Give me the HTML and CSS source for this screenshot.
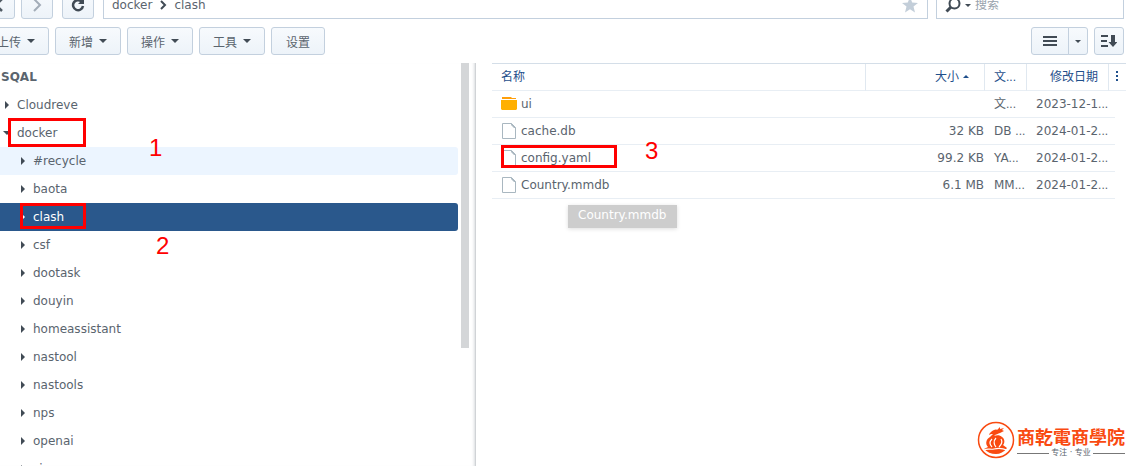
FILE: index.html
```
<!DOCTYPE html>
<html lang="zh-CN">
  <head>
    <meta charset="UTF-8" />
    <meta name="viewport" content="width=device-width, initial-scale=1.0" />
    <title>File Station</title>
    <link rel="stylesheet" href="styles.css">
  </head>
  <body>
    <div class="bar nav">
      <button class="btn icon-btn" aria-label="后退">
        <svg width="12" height="16" viewBox="0 0 12 16"><path d="M9 2L3 8l6 6" fill="none" stroke="#505a64" stroke-width="2.5" /></svg>
      </button>
      <button class="btn icon-btn" aria-label="前进">
        <svg width="12" height="16" viewBox="0 0 12 16"><path d="M3 2l6 6-6 6" fill="none" stroke="#a3adb8" stroke-width="2" /></svg>
      </button>
      <button class="btn icon-btn reload" aria-label="刷新">
        <svg width="16" height="16" viewBox="0 0 16 16"><path d="M11.500 4.500A5 5 0 1 0 13 9" fill="none" stroke="#414b55" stroke-width="2.500" /><path d="M8 7h6V1z" fill="#414b55" /></svg>
      </button>
      <div class="path">
        <a href="#">docker</a>
        <svg width="8" height="10" viewBox="0 0 8 10"><path d="M2 1l4 4-4 4" fill="none" stroke="#414b55" stroke-width="2" /></svg>
        <a href="#">clash</a>
        <svg class="star" width="16" height="16" viewBox="0 0 16 16"><path d="M8 0l2.200 5.500 5.800.4-4.500 3.700 1.500 5.900L8 12.300l-5 3.200 1.500-5.900L0 5.900l5.800-.4z" fill="#c3ced9" /></svg>
      </div>
      <div class="search">
        <svg width="16" height="16" viewBox="0 0 16 16"><circle cx="9.500" cy="6.500" r="5" fill="none" stroke="#414b55" stroke-width="2" /><path d="M6 10l-4.500 4.500" stroke="#414b55" stroke-width="3" /></svg>
        <span class="caret"></span>
        <input type="text" placeholder="搜索" aria-label="搜索" />
      </div>
    </div>

    <div class="bar tools">
      <button class="btn">上传<span class="caret"></span></button>
      <button class="btn">新增<span class="caret"></span></button>
      <button class="btn">操作<span class="caret"></span></button>
      <button class="btn">工具<span class="caret"></span></button>
      <button class="btn">设置</button>
      <div class="view-group">
        <button class="btn view" aria-label="列表视图">
          <svg width="14" height="12" viewBox="0 0 14 12"><path d="M0 2h14M0 6h14M0 10h14" stroke="#414b55" stroke-width="2" /></svg>
        </button>
        <button class="btn view-menu" aria-label="视图选项"><span class="caret"></span></button>
      </div>
      <button class="btn sort" aria-label="排序">
        <svg width="16" height="14" viewBox="0 0 16 14"><path d="M0 2h7M0 7h6M0 12h7" stroke="#414b55" stroke-width="2" /><path d="M10 1h4v7h2.500L12 13 7.500 8H10z" fill="#414b55" /></svg>
      </button>
    </div>

    <div class="main">
      <div class="sidebar">
        <ul class="tree">
          <li class="root">SQAL</li>
          <li><span class="arrow"></span>Cloudreve</li>
          <li><span class="arrow open"></span>docker</li>
          <li class="child hover"><span class="arrow"></span>#recycle</li>
          <li class="child"><span class="arrow"></span>baota</li>
          <li class="child selected"><span class="arrow"></span>clash</li>
          <li class="child"><span class="arrow"></span>csf</li>
          <li class="child"><span class="arrow"></span>dootask</li>
          <li class="child"><span class="arrow"></span>douyin</li>
          <li class="child"><span class="arrow"></span>homeassistant</li>
          <li class="child"><span class="arrow"></span>nastool</li>
          <li class="child"><span class="arrow"></span>nastools</li>
          <li class="child"><span class="arrow"></span>nps</li>
          <li class="child"><span class="arrow"></span>openai</li>
          <li class="child"><span class="arrow"></span>siyuan</li>
        </ul>
        <div class="scrollbar"></div>
      </div>

      <div class="files">
        <table>
          <colgroup>
            <col />
            <col class="col-size" />
            <col class="col-type" />
            <col class="col-date" />
            <col class="col-edge" />
            <col class="col-menu" />
          </colgroup>
          <thead>
            <tr>
              <th>名称</th>
              <th class="num">大小<span class="caret up"></span></th>
              <th>文<span class="dots">...</span></th>
              <th class="num">修改日期</th>
              <th class="more" colspan="2"><svg width="3" height="10" viewBox="0 0 3 10"><path d="M0 0h2v2H0zM0 4h2v2H0zM0 8h2v2H0z" fill="#1f4f8b" /></svg></th>
            </tr>
          </thead>
          <tbody>
            <tr>
              <td><div class="name"><svg width="16" height="16" viewBox="0 0 16 16"><path d="M1 3V1h9l1 1h4v1z" fill="#ff9f0a" /><path d="M0 4h16v9l-1 1H1l-1-1z" fill="#ffb000" /></svg>ui</div></td>
              <td class="num"></td>
              <td>文<span class="dots">...</span></td>
              <td class="date" colspan="2">2023-12-1<span class="dots">...</span></td>
            </tr>
            <tr>
              <td><div class="name"><svg class="doc" width="16" height="16" viewBox="0 0 16 16"><path d="M1.500.5h9l4 4v11h-13z" fill="#fff" stroke="#a9b7c0" /><path d="M10 0v2l3 3h2z" fill="#a9b7c0" /></svg>cache.db</div></td>
              <td class="num">32 KB</td>
              <td>DB <span class="dots">...</span></td>
              <td class="date" colspan="2">2024-01-2<span class="dots">...</span></td>
            </tr>
            <tr>
              <td><div class="name"><svg class="doc" width="16" height="16" viewBox="0 0 16 16"><path d="M1.500.5h9l4 4v11h-13z" fill="#fff" stroke="#a9b7c0" /><path d="M10 0v2l3 3h2z" fill="#a9b7c0" /></svg>config.yaml</div></td>
              <td class="num">99.2 KB</td>
              <td>YA<span class="dots">...</span></td>
              <td class="date" colspan="2">2024-01-2<span class="dots">...</span></td>
            </tr>
            <tr>
              <td><div class="name"><svg class="doc" width="16" height="16" viewBox="0 0 16 16"><path d="M1.500.5h9l4 4v11h-13z" fill="#fff" stroke="#a9b7c0" /><path d="M10 0v2l3 3h2z" fill="#a9b7c0" /></svg>Country.mmdb</div></td>
              <td class="num">6.1 MB</td>
              <td>MM<span class="dots">...</span></td>
              <td class="date" colspan="2">2024-01-2<span class="dots">...</span></td>
            </tr>
          </tbody>
        </table>
      </div>
    </div>

    <div class="tooltip">Country.mmdb</div>

    <!-- step marks -->
    <div class="mark mark-docker"></div>
    <div class="mark mark-clash"></div>
    <div class="mark mark-config"></div>
    <span class="step step-1">1</span>
    <span class="step step-2">2</span>
    <span class="step step-3">3</span>

    <div class="brand">
      <svg width="38" height="38" viewBox="0 0 38 38">
        <circle cx="19" cy="19" r="17.500" fill="none" stroke="#f94a10" stroke-width="1.500" />
        <path d="M14 11c2-2 5-3 6-2l3-3v2l4-1-2 2 2 1-4 2c-2 1-4 1-6 3 3-1 6-1 8 1 3 2 3 6 1 8l4 3c-3 4-7 6-11 6-5 0-9-2-12-5l4-2c-3-3-2-8 2-10l3-3c-2 0-3 0-4 1 0-1 1-2 2-3z" fill="#f94a10" />
        <path d="M15 18c-3 3-2 6 0 8M19 17c-3 3-2 7 0 9M24 18c2 3 0 6-2 8M7 29c4-2 6 0 10-1s8-1 13 1" fill="none" stroke="#fff" stroke-width="1.200" />
      </svg>
      <div class="brand-text">
        <div class="brand-name">商乾電商學院</div>
        <div class="brand-sub">专注 · 专业</div>
      </div>
    </div>
  </body>
</html>
```

FILE: styles.css
```
* {
  box-sizing: border-box;
}
body {
  margin: 0;
  height: 100vh;
  overflow: hidden;
  position: relative;
  display: flex;
  flex-direction: column;
  background: #fff;
  color: #5a646e;
  font-family: "DejaVu Sans", "Noto Sans CJK SC", sans-serif;
  font-size: 12px;
}
button,
input {
  font: inherit;
  color: inherit;
}
a {
  color: inherit;
  text-decoration: none;
}

.bar {
  display: flex;
  flex: none;
  height: 28px;
  margin-left: -17px;
  padding-right: 8px;
}
.nav {
  margin-top: -9px;
}
.tools {
  margin-top: 8px;
  gap: 6px;
}
.btn {
  display: flex;
  align-items: center;
  justify-content: center;
  gap: 6px;
  height: 28px;
  padding: 0 14px;
  border: 1px solid #c3d0de;
  border-radius: 3px;
  background: linear-gradient(#f7fafd, #edf3f9);
}
.icon-btn {
  width: 32px;
  padding: 0;
  margin-right: 6px;
}
.reload {
  margin-left: 3px;
  margin-right: 9px;
}
.caret {
  border: 3px solid transparent;
  border-top-color: #414b55;
  border-bottom: 0;
}
.caret.up {
  display: inline-block;
  margin-left: 4px;
  vertical-align: 3px;
  border-top: 0;
  border-bottom: 3px solid #1f4f8b;
}
.path,
.search {
  display: flex;
  align-items: center;
  border: 1px solid #c3d0de;
}
.path {
  flex: 1;
  gap: 7px;
  margin-right: 8px;
  padding: 0 9px 0 8px;
}
.star {
  margin-left: auto;
}
.search {
  width: 188px;
  padding-left: 8px;
}
.search .caret {
  margin: 0 4px;
}
.search input {
  flex: 1;
  min-width: 0;
  padding: 0;
  border: 0;
  outline: 0;
  background: none;
}
.search input::placeholder {
  color: #98a2ad;
}
.tools > .btn .caret {
  border-width: 4px 4px 0;
}
.tools > .btn {
  padding: 0 13px;
}
.tools > .btn:nth-child(5) {
  padding: 0 14px;
}
.view-group {
  display: flex;
  margin-left: auto;
}
.view {
  width: 38px;
  padding: 0;
  border-radius: 3px 0 0 3px;
}
.view-menu {
  width: 20px;
  margin-left: -1px;
  padding: 0;
  border-radius: 0 3px 3px 0;
}
.tools > .sort {
  width: 30px;
  padding: 0;
}

.main {
  display: flex;
  flex: 1;
  min-height: 0;
  margin-top: 8px;
}
.sidebar {
  display: flex;
  flex: none;
  width: 476px;
  min-height: 0;
  padding-right: 6px;
  border-right: 1px solid #d0d3d6;
  box-shadow: inset -3px 0 3px -2px #d9dcdf;
  overflow: hidden;
}
.tree {
  flex: 1;
  margin: 0 3px 0 0;
  padding: 0;
  list-style: none;
}
.tree li {
  display: flex;
  align-items: center;
  height: 28px;
  padding-left: 5px;
  border-radius: 0 3px 3px 0;
}
.tree .root {
  padding-left: 1px;
  font-weight: bold;
}
.tree .child {
  padding-left: 21px;
}
.tree .hover {
  background: #ecf5ff;
}
.tree .selected {
  background: #2a588c;
  color: #fff;
}
.arrow {
  width: 4px;
  margin-right: 8px;
  border: 4px solid transparent;
  border-left-color: #414b55;
  border-right: 0;
}
.arrow.open {
  width: 8px;
  margin: 0 6px 0 -2px;
  border: 4px solid transparent;
  border-top-color: #414b55;
  border-bottom: 0;
}
.selected .arrow {
  border-left-color: #fff;
}
.scrollbar {
  width: 8px;
  height: 285px;
  background: #d4d6d8;
}

.files {
  flex: 1;
  min-width: 0;
  padding: 0 6px 0 16px;
}
table {
  width: 100%;
  table-layout: fixed;
  border-collapse: separate;
  border-spacing: 0;
  border-top: 1px solid #d4dee8;
}
.col-size {
  width: 119px;
}
.col-type {
  width: 42px;
}
.col-date {
  width: 82px;
}
.col-edge {
  width: 6px;
}
.col-menu {
  width: 11px;
}
th,
td {
  height: 27px;
  padding: 0 0 0 9px;
  border-bottom: 1px solid #e8eef4;
  text-align: left;
  font-weight: normal;
  line-height: 16px;
  white-space: nowrap;
}
th {
  border-right: 1px solid #e0e8f0;
  color: #1f4f8b;
}
th.num {
  padding-right: 10px;
  text-align: right;
}
th.num:has(.caret) {
  padding-right: 15px;
}
th.more {
  padding-left: 7px;
  border-right: 0;
}
td.num {
  padding-right: 1px;
  text-align: right;
}
.name {
  display: flex;
  align-items: center;
  gap: 4px;
}
.dots {
  font-family: "Liberation Sans", sans-serif;
  font-size: 12px;
}

.tooltip {
  position: absolute;
  top: 205px;
  left: 568px;
  padding: 2px 11px 5px 10px;
  background: #cdcdcd;
  color: #fff;
  line-height: 16px;
  box-shadow: 0 1px 4px #ddd;
}
.mark {
  position: absolute;
  border: 3px solid #f00;
}
.mark-docker {
  top: 118px;
  left: 8px;
  width: 78px;
  height: 29px;
}
.mark-clash {
  top: 203px;
  left: 20px;
  width: 66px;
  height: 26px;
}
.mark-config {
  top: 145px;
  left: 501px;
  width: 116px;
  height: 23px;
}
.step {
  position: absolute;
  color: #f00;
  font-family: "Liberation Sans", Arial, sans-serif;
  font-size: 24px;
  line-height: 24px;
}
.step-1 {
  top: 136px;
  left: 149px;
}
.step-2 {
  top: 234px;
  left: 156px;
}
.step-3 {
  top: 139px;
  left: 645px;
}

.brand {
  position: absolute;
  right: 7px;
  bottom: 7px;
  display: flex;
  align-items: center;
  gap: 2px;
}
.brand-name {
  color: #f94a10;
  font-family: "Noto Sans CJK TC", sans-serif;
  font-size: 18px;
  font-weight: bold;
  line-height: 26px;
}
.brand-sub {
  display: flex;
  align-items: center;
  gap: 2px;
  font-size: 8px;
  line-height: 8px;
}
.brand-sub::before,
.brand-sub::after {
  content: "";
  flex: 1;
  height: 1px;
  background: #777;
}
```
